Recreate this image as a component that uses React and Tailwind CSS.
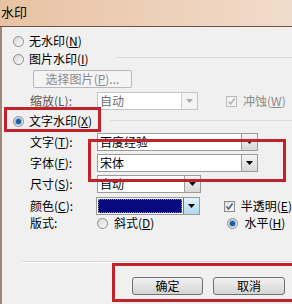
import React from 'react';

const font = "font-['Noto_Sans_CJK_SC','Noto_Sans_CJK_JP',sans-serif]";

function Mn({ k }) {
  // mnemonic key like (N), letter underlined
  return (
    <span>
      (<span className="underline underline-offset-1">{k}</span>)
    </span>
  );
}

function Radio({ checked }) {
  return (
    <div className="w-[11px] h-[11px] rounded-full border border-[#8a8a8a] bg-gradient-to-br from-[#d8d8d8] to-[#fbfbfb] flex items-center justify-center shrink-0">
      {checked && (
        <div className="w-[5px] h-[5px] rounded-full bg-[#1f5a9e] ring-1 ring-[#7fb0dc]" />
      )}
    </div>
  );
}

function Check({ checked, disabled }) {
  return (
    <div
      className={`w-[11px] h-[11px] border flex items-center justify-center shrink-0 ${
        disabled ? 'border-[#b9b9b9] bg-[#f4f4f4]' : 'border-[#8a8a8a] bg-gradient-to-br from-[#dcdcdc] to-[#fdfdfd]'
      }`}
    >
      {checked && (
        <svg width="9" height="9" viewBox="0 0 9 9">
          <path
            d="M1.5 4.5 L3.6 7 L7.6 1.5"
            fill="none"
            stroke={disabled ? '#b4b4b4' : '#4a5f86'}
            strokeWidth="1.6"
          />
        </svg>
      )}
    </div>
  );
}

function Arrow({ disabled, hot }) {
  return (
    <div
      className={`w-[16px] h-full border-l flex items-center justify-center ${
        hot
          ? 'border-[#3c7fb1] bg-gradient-to-b from-[#e4f3fb] to-[#b0d9f0]'
          : disabled
          ? 'border-[#d0d0d0] bg-[#f4f4f4]'
          : 'border-[#9c9c9c] bg-gradient-to-b from-[#f4f4f4] to-[#d8d8d8]'
      }`}
    >
      <svg width="7" height="4" viewBox="0 0 7 4">
        <path d="M0 0 H7 L3.5 4 Z" fill={disabled ? '#a8a8a8' : '#000'} />
      </svg>
    </div>
  );
}

function Combo({ w, text, disabled }) {
  return (
    <div
      className={`h-[18px] flex border bg-white ${disabled ? 'border-[#c4c4c4] text-[#6d6d6d]' : 'border-[#9a9a9a]'}`}
      style={{ width: w }}
    >
      <div className="flex-1 pl-[2px] leading-[16px]">{text}</div>
      <Arrow disabled={disabled} />
    </div>
  );
}

function Label({ children }) {
  return <div className="ml-[17px] w-[67px] leading-[18px] whitespace-nowrap">{children}</div>;
}

export default function App() {
  return (
    <div className={`w-[292px] h-[304px] overflow-hidden bg-[#f0f0f0] relative text-[12px] text-black ${font}`}>
      {/* title bar */}
      <div className="h-[27px] border-b border-[#6e5646] bg-gradient-to-r from-[#e8c2a2] to-[#f1dccb] pl-[1px] pt-[3px] text-[13px] leading-[18px]">
        水印
      </div>

      <div className="h-[277px] border-l-2 border-[#a08676] pl-[11px] flex flex-col">
        <div className="mt-[5px] h-[18px] flex items-center gap-[5px]">
          <Radio />
          <span>无水印<Mn k="N" /></span>
        </div>
        <div className="h-[18px] flex items-center gap-[5px]">
          <Radio />
          <span>图片水印<Mn k="I" /></span>
          <div className="flex-1 ml-[22px] self-start mt-[7px] border-t border-[#dadada]" />
        </div>
        <div className="mt-[2px] h-[18px] ml-[20px] w-[99px] border border-[#b5b9bd] rounded-[2px] bg-[#f4f4f4] text-[#8a8a8a] flex items-center justify-center">
          选择图片<Mn k="P" />...
        </div>
        <div className="mt-[4px] h-[18px] flex items-center text-[#555]">
          <Label>缩放<Mn k="L" />:</Label>
          <Combo w={101} text="自动" disabled />
          <div className="ml-[28px] flex items-center gap-[6px] text-[#8a8a8a]">
            <Check checked disabled />
            <span className="whitespace-nowrap">冲蚀<Mn k="W" /></span>
          </div>
        </div>
        <div className="mt-[2px] h-[18px] flex items-center gap-[5px]">
          <Radio checked />
          <span>文字水印<Mn k="X" /></span>
          <div className="flex-1 ml-[13px] self-start mt-[8px] border-t border-[#dadada]" />
        </div>
        <div className="mt-[3px] h-[18px] flex items-center">
          <Label>文字<Mn k="T" />:</Label>
          <Combo w={161} text="百度经验" />
        </div>
        <div className="mt-[3px] h-[18px] flex items-center">
          <Label>字体<Mn k="F" />:</Label>
          <Combo w={161} text="宋体" />
        </div>
        <div className="mt-[3px] h-[18px] flex items-center">
          <Label>尺寸<Mn k="S" />:</Label>
          <Combo w={104} text="自动" />
        </div>
        <div className="mt-[4px] h-[18px] flex items-center">
          <Label>颜色<Mn k="C" />:</Label>
          <div className="w-[106px] h-[18px] flex border border-[#9a9a9a] bg-white">
            <div className="flex-1 p-[1px]">
              <div className="h-full border border-dotted border-[#888] bg-[#0a0a80]" />
            </div>
            <Arrow hot />
          </div>
          <div className="ml-[24px] flex items-center gap-[6px]">
            <Check checked />
            <span className="whitespace-nowrap">半透明<Mn k="E" /></span>
          </div>
        </div>
        <div className="h-[16px] flex items-center">
          <Label>版式:</Label>
          <Radio />
          <span className="ml-[6px] whitespace-nowrap">斜式<Mn k="D" /></span>
          <div className="ml-[73px] flex items-center gap-[6px]">
            <Radio checked />
            <span className="whitespace-nowrap">水平<Mn k="H" /></span>
          </div>
        </div>
        <div className="mt-[30px] ml-[9px] border-t border-[#d5d5d5] border-b border-b-white" />
        <div className="mt-[14px] ml-[119px] flex gap-[10px]">
          <button className="w-[71px] h-[18px] border border-[#707070] rounded-[3px] bg-gradient-to-b from-[#f2f2f2] to-[#d4d4d4] leading-[16px]">
            确定
          </button>
          <button className="w-[72px] h-[18px] border border-[#707070] rounded-[3px] bg-gradient-to-b from-[#f2f2f2] to-[#d4d4d4] leading-[16px]">
            取消
          </button>
        </div>
      </div>

      {/* red annotation boxes */}
      <div className="absolute left-[4px] top-[107px] w-[97px] h-[25px] border-[3px] border-[#c2232b]" />
      <div className="absolute left-[88px] top-[139px] w-[198px] h-[43px] border-[3px] border-[#c2232b]" />
      <div className="absolute left-[112px] top-[263px] w-[190px] h-[39px] border-[3px] border-[#c2232b]" />
    </div>
  );
}
